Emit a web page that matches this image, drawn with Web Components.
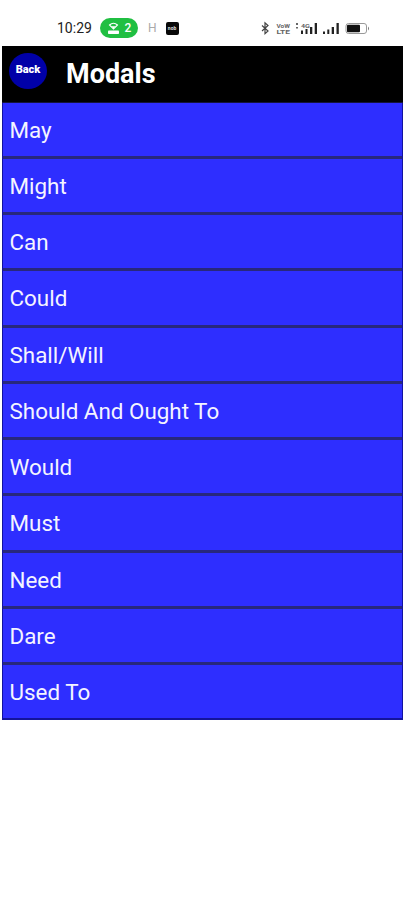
<!DOCTYPE html>
<html lang="en">
<head>
<meta charset="utf-8">
<meta name="viewport" content="width=device-width, initial-scale=1">
<title>Modals</title>
<style>
body {
	margin: 0;
	background-color: #fff;
	font-family: Roboto, "Liberation Sans", sans-serif;
}
</style>
</head>
<body>
<status-bar time="10:29"></status-bar>
<topic-screen>
	<title-bar slot="header">Modals</title-bar>
	<topic-item>May</topic-item>
	<topic-item>Might</topic-item>
	<topic-item>Can</topic-item>
	<topic-item>Could</topic-item>
	<topic-item>Shall/Will</topic-item>
	<topic-item>Should And Ought To</topic-item>
	<topic-item>Would</topic-item>
	<topic-item>Must</topic-item>
	<topic-item>Need</topic-item>
	<topic-item>Dare</topic-item>
	<topic-item>Used To</topic-item>
</topic-screen>

<script>
const html = String.raw;

function attach(el, markup) {
	const template = document.createElement('template');
	template.innerHTML = markup;
	el.attachShadow({ mode: 'open' }).appendChild(template.content.cloneNode(true));
}

class StatusBar extends HTMLElement {
	constructor() {
		super();
		attach(this, html`
<style>
:host {
	display: flex;
	justify-content: space-between;
	align-items: center;
	box-sizing: border-box;
	height: 46px;
	padding: 10px 34px 0 57px;
	color: #222;
}
.left, .right {
	display: flex;
	align-items: center;
}
.time {
	width: 36px;
	font-size: 14px;
	line-height: 18px;
	white-space: nowrap;
}
.hotspot {
	display: flex;
	align-items: center;
	justify-content: center;
	gap: 5px;
	box-sizing: border-box;
	width: 38px;
	height: 20px;
	margin-left: 7px;
	border-radius: 10px;
	background-color: #20bf42;
	color: #fff;
	font-size: 12px;
	font-weight: 500;
}
.network {
	margin-left: 10px;
	color: #aaa;
	font-size: 12px;
}
.app {
	display: flex;
	align-items: center;
	justify-content: center;
	width: 13px;
	height: 13px;
	margin-left: 9px;
	border-radius: 2px;
	background-color: #080808;
	color: #ddd;
	font-size: 5px;
	font-weight: 700;
}
svg {
	display: block;
}
</style>
<div class="left">
	<span class="time"></span>
	<span class="hotspot">
		<svg width="13" height="13" viewBox="0 0 13 13" fill="none" stroke="#fff">
			<path d="M2.500 3Q6.500-.5 10.500 3L6.500 7z" stroke-width="1.100"/>
			<path d="M4.500 4.200h4L6.500 6.500z" fill="#fff" stroke="none"/>
			<rect x="1" y="8.500" width="11" height="3.500" rx=".8" fill="#fff" stroke="none"/>
		</svg>
		<span>2</span>
	</span>
	<span class="network">H</span>
	<span class="app">nob</span>
</div>
<div class="right">
	<svg width="110" height="18" viewBox="260 18 110 18" fill="#222">
		<!-- bluetooth -->
		<path d="M262 24.500l6 5.500-3 2.700V21.800l3 2.700-6 5.500" fill="none" stroke="#444" stroke-width="1.200"/>
		<!-- bars of the first sim -->
		<path d="M301 29.500h2v3.500h-2zM305.500 28h2v5h-2zM310 26h2.300v7H310zM314.700 22h2.300v11h-2.300z"/>
		<!-- bars of the second sim -->
		<path d="M323 30.500h2v2.500h-2zM327.300 28.500h2v4.500h-2zM331.700 26h2.300v7h-2.300zM336.500 22h2.300v11h-2.300z"/>
		<!-- battery -->
		<rect x="346" y="22.500" width="20.500" height="10" rx="2.500" fill="none" stroke="#999"/>
		<rect x="347" y="23.800" width="13" height="7.400" rx="1" fill="#111"/>
		<path d="M368 25.500q2 2 0 4z" fill="#777"/>
		<g font-family="Roboto, sans-serif" font-weight="700" fill="#666">
			<text x="276.500" y="26.500" font-size="5" textLength="13.500" lengthAdjust="spacingAndGlyphs">VoW</text>
			<text x="276.500" y="32.800" font-size="5" textLength="13.500" lengthAdjust="spacingAndGlyphs">LTE</text>
			<text x="301" y="26.500" font-size="6" textLength="9" lengthAdjust="spacingAndGlyphs">4G</text>
		</g>
		<path d="M296 22h2v2h-2zM296 26h2v1.500h-2z" fill="#666"/>
	</svg>
</div>
`);
	}

	connectedCallback() {
		this.shadowRoot.querySelector('.time').textContent = this.getAttribute('time');
	}
}

class TopicScreen extends HTMLElement {
	constructor() {
		super();
		attach(this, html`
<style>
:host {
	display: block;
	box-sizing: border-box;
	margin: 0 1px 0 2px;
}
.list {
	border: solid #1212a0;
	border-width: 0 1px;
}
</style>
<slot name="header"></slot>
<div class="list"><slot></slot></div>
`);
	}
}

class TitleBar extends HTMLElement {
	constructor() {
		super();
		attach(this, html`
<style>
:host {
	display: flex;
	align-items: flex-start;
	box-sizing: border-box;
	height: 56.500px;
	padding: 7px 7px 0;
	border-bottom: 1px solid #14143c;
	background-color: #000;
	color: #fff;
}
.back {
	flex: none;
	width: 38px;
	height: 36px;
	padding: 0 0 2px;
	border: 0;
	border-radius: 50%;
	background-color: #0000a8;
	color: #fff;
	font: 900 11px/32px Roboto, sans-serif;
}
.title {
	margin: 4px 0 0 19px;
	font-size: 27px;
	font-weight: 700;
	line-height: 34px;
}
</style>
<button class="back" type="button">Back</button>
<h1 class="title"><slot></slot></h1>
`);
	}
}

class TopicItem extends HTMLElement {
	constructor() {
		super();
		attach(this, html`
<style>
:host {
	display: flex;
	align-items: center;
	box-sizing: border-box;
	height: 56.250px;
	padding: 1px 6.500px 0;
	border-bottom: 3px solid #28287c;
	background-color: #2e2eff;
	color: #f4f4ff;
	font-size: 22.400px;
	line-height: 28px;
}
:host(:last-child) {
	height: 55px;
	border-bottom: 2px solid #14149c;
}
</style>
<slot></slot>
`);
	}
}

customElements.define('status-bar', StatusBar);
customElements.define('topic-screen', TopicScreen);
customElements.define('title-bar', TitleBar);
customElements.define('topic-item', TopicItem);
</script>
</body>
</html>
